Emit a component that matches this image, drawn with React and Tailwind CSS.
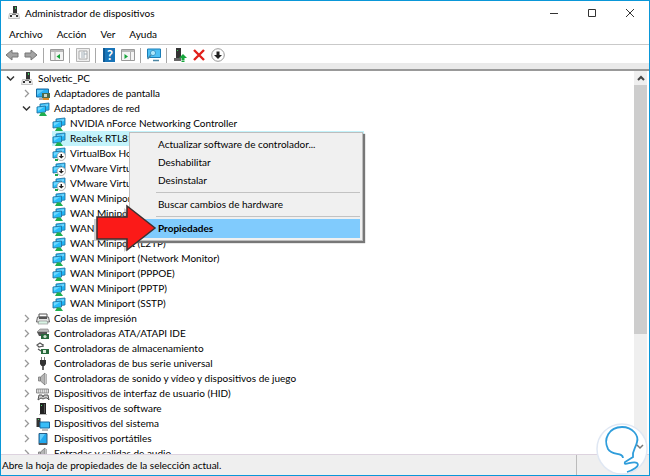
import React from "react";

function Monitors({ overlay }) {
  return (
    <svg className="h-[14px] w-[14px] shrink-0" viewBox="0 0 14 14">
      <path d="M4 2l9-1v7l-9 1z" fill="#1fb4f4" stroke="#2b7ba8" strokeWidth="0.9" />
      <path d="M5 3l7-1v2L5 6z" fill="#6fd6ff" />
      <path d="M1 5l8.500-1v6L1 11z" fill="#25bdfb" stroke="#2374a3" strokeWidth="0.9" />
      <path d="M1.800 5.600L8 5 2 9z" fill="#6fd8ff" />
      {overlay === "down" ? (
        <g>
          <path d="M3 12h3v2H3z" fill="#1ea54b" />
          <circle cx="9.300" cy="9.300" r="4.200" fill="#fff" stroke="#9a9a9a" strokeWidth="0.8" />
          <path d="M8.600 7h1.400v2h2L9.300 11.500 6.600 9h2z" fill="#222" />
        </g>
      ) : (
        <path d="M5 10.500h3.500L11 14H3z" fill="#1fae4e" />
      )}
    </svg>
  );
}

function Icon({ name }) {
  if (name === "net") return <Monitors />;
  if (name === "netdown") return <Monitors overlay="down" />;
  const art = {
    pc: (
      <g>
        <path d="M6 0h4v8H6z" fill="#333" />
        <path d="M8 1h1v2H8z" fill="#3ad15a" />
        <path d="M2.500 7.500h9l1 5h-11z" fill="#f2f2f2" stroke="#aaa" strokeWidth="0.7" />
        <path d="M3 9h2v2H3zM9 9h2v2H9z" fill="#333" />
        <path d="M5 8h4v1H5z" fill="#777" />
      </g>
    ),
    display: (
      <g>
        <path d="M.5 2h12v8H.5z" fill="#27aef2" stroke="#1769a0" />
        <path d="M1 3h7L1 8z" fill="#63cdfa" />
        <path d="M3 12h4" stroke="#555" />
        <path d="M6 6h8v5H6z" fill="#4a6a4d" />
        <path d="M8 7h3v3H8z" fill="#c9d6c8" />
        <path d="M7 11h6v2H7z" fill="#dd8a25" />
      </g>
    ),
    printer: (
      <g>
        <path d="M3 2h8v3H3z" fill="#fff" stroke="#555" />
        <path d="M1.500 5h11l1 5H.5z" fill="#e4e4e4" stroke="#666" />
        <path d="M3 5h8v2H3z" fill="#555" />
        <path d="M3 9h8l1 3H2z" fill="#d9f3e4" stroke="#888" strokeWidth="0.6" />
      </g>
    ),
    ata: (
      <g>
        <path d="M1 5l3-3h8l1 3z" fill="#bbb" stroke="#777" strokeWidth="0.6" />
        <path d="M1 5h10v4H3z" fill="#555" />
        <path d="M5 7h8v5H5z" fill="#27683b" />
        <circle cx="9" cy="9.500" r="1.600" fill="#cfe0cf" />
      </g>
    ),
    storage: (
      <g>
        <path d="M7 3L4 1 1 3l2 2 4-1M2 7l3 2M7 2v3" fill="none" stroke="#555" strokeWidth="1.200" />
        <path d="M5 7h8v5H5z" fill="#27683b" />
        <path d="M7 8h3v3H7z" fill="#d8ead8" />
      </g>
    ),
    usb: (
      <g>
        <path d="M5 0h1v4H5zM8 0h1v4H8z" fill="#777" />
        <path d="M4 3h6v4L8.500 9h-3L4 7z" fill="#333" />
        <path d="M7 9v4" stroke="#333" strokeWidth="1.500" />
      </g>
    ),
    sound: (
      <g>
        <path d="M2.500 5h2l4.500-4v12L4.500 9h-2z" fill="#b5b5b5" stroke="#777" strokeWidth="0.8" />
        <path d="M4.500 5v4" stroke="#777" strokeWidth="0.8" />
        <path d="M10.500 2v10" stroke="#b5b5b5" strokeWidth="1" />
      </g>
    ),
    hid: (
      <g>
        <path d="M.5 2h12v4H.5z" fill="#ddd" stroke="#777" strokeWidth="0.8" />
        <path d="M2 3h10M2 5h10" stroke="#888" strokeDasharray="1 1" />
        <path d="M2 13l1-5h3l1 2 1-2h4l1 5-2-2H9l-2 1-2-1z" fill="#ccc" stroke="#555" strokeWidth="1" />
      </g>
    ),
    software: (
      <g>
        <path d="M4 1h6v11H4z" fill="#222" />
        <path d="M5 3h1v1H5z" fill="#44dd66" />
        <path d="M8 2h1v9H8z" fill="#555" />
        <path d="M3 12h8v1H3z" fill="#bbb" />
      </g>
    ),
    system: (
      <g>
        <path d="M.5 1h4v9h-4z" fill="#333" />
        <path d="M2 2h1v1H2z" fill="#3ad15a" />
        <path d="M4 5h9.500v6H4z" fill="#38bdf8" stroke="#1769a0" />
        <path d="M6 13h6" stroke="#777" />
      </g>
    ),
    portable: (
      <g>
        <path d="M3 1.500h8v11H3z" fill="#22a9ee" stroke="#2b5f87" />
        <path d="M4 2h5L4 9z" fill="#65cdfa" />
        <path d="M3 11h8v2H3z" fill="#555" />
      </g>
    ),
  }[name];
  return (
    <svg className="h-[14px] w-[14px] shrink-0" viewBox="0 0 14 14">
      {art}
    </svg>
  );
}

function Chevron({ open }) {
  return (
    <svg className="h-[9px] w-[9px]" viewBox="0 0 9 9" fill="none">
      {open ? (
        <path d="M1 2.500L4.500 6 8 2.500" stroke="#333" strokeWidth="1.500" />
      ) : (
        <path d="M3 1l3.500 3.500L3 8" stroke="#999" strokeWidth="1.300" />
      )}
    </svg>
  );
}

const indent = ["pl-[4px]", "pl-[20px]", "pl-[36px]"];

const rows = [
  { level: 0, open: true, icon: "pc", text: "Solvetic_PC" },
  { level: 1, icon: "display", text: "Adaptadores de pantalla" },
  { level: 1, open: true, icon: "net", text: "Adaptadores de red" },
  { level: 2, icon: "net", text: "NVIDIA nForce Networking Controller" },
  { level: 2, icon: "net", text: "Realtek RTL81", selected: true },
  { level: 2, icon: "netdown", text: "VirtualBox Ho" },
  { level: 2, icon: "netdown", text: "VMware Virtu" },
  { level: 2, icon: "netdown", text: "VMware Virtu" },
  { level: 2, icon: "net", text: "WAN Miniport" },
  { level: 2, icon: "net", text: "WAN Miniport" },
  { level: 2, icon: "net", text: "WAN Miniport" },
  { level: 2, icon: "net", text: "WAN Miniport (L2TP)" },
  { level: 2, icon: "net", text: "WAN Miniport (Network Monitor)" },
  { level: 2, icon: "net", text: "WAN Miniport (PPPOE)" },
  { level: 2, icon: "net", text: "WAN Miniport (PPTP)" },
  { level: 2, icon: "net", text: "WAN Miniport (SSTP)" },
  { level: 1, icon: "printer", text: "Colas de impresión" },
  { level: 1, icon: "ata", text: "Controladoras ATA/ATAPI IDE" },
  { level: 1, icon: "storage", text: "Controladoras de almacenamiento" },
  { level: 1, icon: "usb", text: "Controladoras de bus serie universal" },
  { level: 1, icon: "sound", text: "Controladoras de sonido y vídeo y dispositivos de juego" },
  { level: 1, icon: "hid", text: "Dispositivos de interfaz de usuario (HID)" },
  { level: 1, icon: "software", text: "Dispositivos de software" },
  { level: 1, icon: "system", text: "Dispositivos del sistema" },
  { level: 1, icon: "portable", text: "Dispositivos portátiles" },
  { level: 1, icon: "sound", text: "Entradas y salidas de audio" },
];

function TreeRow({ row }) {
  return (
    <li className={`flex h-[15px] items-center ${indent[row.level]}`}>
      {row.level < 2 ? (
        <button className="flex w-[14px] shrink-0 items-center" aria-label={row.text}>
          <Chevron open={row.open} />
        </button>
      ) : (
        <span className="w-[14px] shrink-0" />
      )}
      <span className={`flex h-[15px] items-center gap-1 whitespace-nowrap ${row.selected ? "w-[312px] bg-[#c3f3fb]" : ""}`}>
        <Icon name={row.icon} />
        {row.text}
      </span>
    </li>
  );
}

const toolArt = {
  back: <path d="M1 7l6-5v3h6v4H7v3z" fill="#a3a3a3" stroke="#777" strokeWidth="1" />,
  forward: <path d="M13 7L7 2v3H1v4h6v3z" fill="#a3a3a3" stroke="#777" strokeWidth="1" />,
  tree: (
    <g>
      <path d="M.5 1.500h13v11H.5z" fill="#f4f4f4" stroke="#999" />
      <path d="M1 2h12v2H1z" fill="#bbb" />
      <path d="M5 4v8" stroke="#aaa" />
      <path d="M10 6v5L6.500 8.500z" fill="#16a53a" />
    </g>
  ),
  props: (
    <g>
      <path d="M.5.500h13v13H.5z" fill="#eee" stroke="#b5b5b5" />
      <path d="M3 3h8v8H3z" fill="#fafafa" stroke="#aaa" />
      <path d="M5 5h2M5 7h4M5 9h4M8 3v3h3" stroke="#a5b0b8" />
    </g>
  ),
  help: (
    <g>
      <path d="M1 0h12v14H1z" fill="#1874b8" />
      <path d="M1 0h2v14H1z" fill="#0f5a94" />
      <text x="8" y="12" textAnchor="middle" fontSize="13" fontWeight="700" fill="#fff">?</text>
    </g>
  ),
  action: (
    <g>
      <path d="M.5 1.500h13v11H.5z" fill="#f4f4f4" stroke="#999" />
      <path d="M1 2h12v2H1z" fill="#bbb" />
      <path d="M9.500 4v8" stroke="#aaa" />
      <path d="M3.500 6v5L7 8.500z" fill="#16a53a" />
    </g>
  ),
  scan: (
    <g>
      <path d="M.5 1h13v8.500H.5z" fill="#4cc0f5" stroke="#1b7db6" />
      <circle cx="6" cy="5" r="2.600" fill="#aee7fb" stroke="#3b98c9" />
      <path d="M4 7l-3.500 4M6 12.500h6" stroke="#4c86a3" strokeWidth="1.500" />
    </g>
  ),
  update: (
    <g>
      <path d="M3 0h5v10H3z" fill="#333" />
      <path d="M4 2h1v1H4z" fill="#3ad15a" />
      <path d="M1 10h7v3H1z" fill="#666" />
      <path d="M10 6l4 4h-2.500v2h-3v-2H6zM8.500 12.500h3V14h-3z" fill="#17a53c" />
    </g>
  ),
  remove: <path d="M2 2l10 10M12 2L2 12" stroke="#e1201b" strokeWidth="2.400" />,
  down: (
    <g>
      <circle cx="7" cy="7" r="6.300" fill="#fff" stroke="#999" />
      <path d="M5.500 3.500h3V7H11l-4 4-4-4h2.500z" fill="#222" />
    </g>
  ),
};

function Tool({ name, label }) {
  return (
    <button aria-label={label} className="flex size-[14px] items-center justify-center">
      <svg className="size-[14px]" viewBox="0 0 14 14" fill="none">
        {toolArt[name]}
      </svg>
    </button>
  );
}

function Divider() {
  return <span className="mr-px h-[15px] w-px bg-[#a8a8a8]" />;
}

export default function App() {
  return (
    <div className="relative flex h-screen w-full flex-col overflow-hidden border border-[#0a97d8] bg-white font-[Lato,'Noto_Sans',sans-serif] text-[10px] leading-[15px] text-black">
      <header className="flex h-[24px] shrink-0 items-center pl-[6px]">
        <Icon name="pc" />
        <h1 className="ml-[4px] flex-1">Administrador de dispositivos</h1>
        <div className="flex items-center gap-[28px] pr-[14px]">
          <button aria-label="Minimizar"><svg className="size-[10px]" viewBox="0 0 10 10"><path d="M1 5.500h8" stroke="#333" /></svg></button>
          <button aria-label="Maximizar"><svg className="size-[10px]" viewBox="0 0 10 10"><path d="M1.500 1.500h7v7h-7z" fill="none" stroke="#333" /></svg></button>
          <button aria-label="Cerrar"><svg className="size-[10px]" viewBox="0 0 10 10"><path d="M1 1l8 8M9 1L1 9" stroke="#333" /></svg></button>
        </div>
      </header>
      <nav className="flex h-[20px] shrink-0 items-center gap-[14px] border-b border-[#c9c9c9] pl-[8px]">
        <button>Archivo</button>
        <button>Acción</button>
        <button>Ver</button>
        <button>Ayuda</button>
      </nav>
      <div className="flex h-[18px] shrink-0 items-center gap-[5px] pt-[2px] pl-[4px]">
        <Tool name="back" label="Atrás" />
        <Tool name="forward" label="Adelante" />
        <Divider />
        <Tool name="tree" label="Mostrar árbol" />
        <Divider />
        <Tool name="props" label="Propiedades del equipo" />
        <Divider />
        <Tool name="help" label="Ayuda de la ventana" />
        <Tool name="action" label="Panel de acciones" />
        <Divider />
        <Tool name="scan" label="Buscar cambios" />
        <Divider />
        <Tool name="update" label="Actualizar" />
        <Tool name="remove" label="Quitar" />
        <Tool name="down" label="Bajar" />
      </div>
      <div className="h-[6px] shrink-0 bg-[#eaeaea]" />
      <main className="flex min-h-0 flex-1 border-t-2 border-[#999]">
        <ul className="min-w-0 flex-1 overflow-hidden pl-px">
          {rows.map((row, i) => (
            <TreeRow key={i} row={row} />
          ))}
        </ul>
        <div className="mr-[2px] flex w-[13px] flex-col bg-[#efefef]">
          <button aria-label="Subir" className="flex h-[14px] items-center justify-center">
            <svg className="size-[8px]" viewBox="0 0 8 8"><path d="M1 6l3-3 3 3" fill="none" stroke="#444" strokeWidth="2" /></svg>
          </button>
          <div className="h-[65%] bg-[#cdcdcd]" />
        </div>
      </main>
      <footer className="flex h-[21px] shrink-0 border-t border-[#ddd3df] bg-[#efefef]">
        <p className="flex-1 pt-[3px] pl-px">Abre la hoja de propiedades de la selección actual.</p>
        <span className="mr-[72px] w-px bg-[#bbb]" />
      </footer>

      <div role="menu" className="absolute top-[131px] left-[128px] flex w-[234px] flex-col border border-[#bdbdbd] bg-[#f0f0f0] p-[2px] shadow-[2px_2px_1px_#777]">
        <button className="h-[18px] pl-[26px] text-left">Actualizar software de controlador...</button>
        <button className="h-[18px] pl-[26px] text-left">Deshabilitar</button>
        <button className="h-[19px] pl-[26px] text-left">Desinstalar</button>
        <hr className="my-[2px] ml-[24px] border-[#c2c2c2]" />
        <button className="h-[19px] pl-[26px] text-left">Buscar cambios de hardware</button>
        <hr className="my-[2px] ml-[24px] border-[#c2c2c2]" />
        <button className="h-[19px] bg-[#80cbfd] pl-[26px] text-left font-bold">Propiedades</button>
      </div>
      <svg className="absolute top-[203px] left-[93px] h-[50px] w-[64px]" viewBox="0 0 64 50">
        <path d="M1 13h31V2l28 22-28 22V35H1z" fill="#888" opacity="0.400" transform="translate(-2 2)" />
        <path d="M3 13h30V2l28 22-28 22V35H3z" fill="#fb1a18" stroke="#3d3030" strokeWidth="1.500" />
      </svg>
      <svg className="absolute right-0 bottom-0 size-[54px]" viewBox="0 0 54 54">
        <circle cx="27" cy="28" r="25" fill="#fff" stroke="#dfe7f3" strokeWidth="1.500" />
        <path d="M28 37C28 31 17 35 13 28 8 18 14 6 27 6c11 0 17 9 15 15-1 6-5 8-4 15l-8 5c-2 5 8-2 12 1 4 3-6 8-10 9" fill="none" stroke="#2f9ddb" strokeWidth="1.800" />
        <path d="M42 24l3 3 3-3" fill="none" stroke="#777" strokeWidth="1.500" />
      </svg>
    </div>
  );
}
